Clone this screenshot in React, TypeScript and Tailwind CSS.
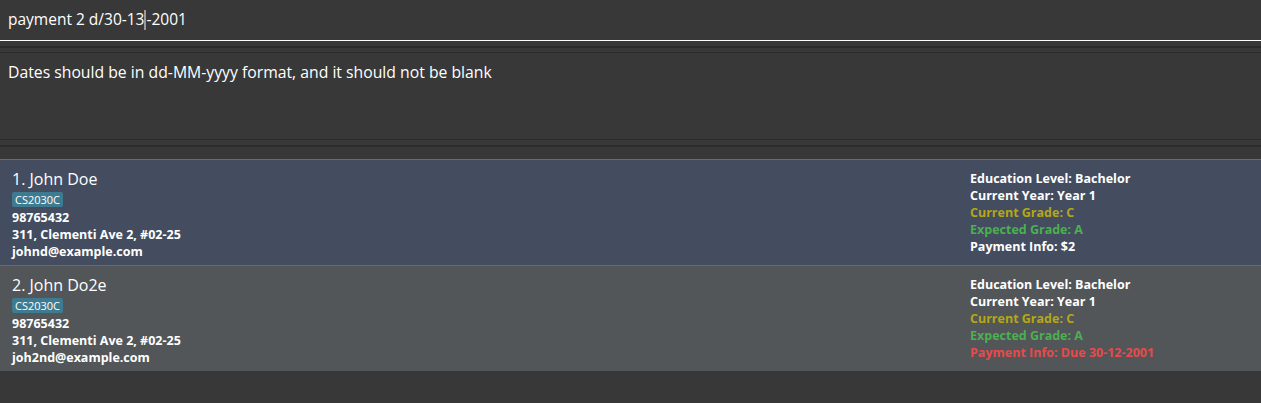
import React from "react";

const font = { fontFamily: '"Open Sans", "Noto Sans", sans-serif' };

function Card({
  idx,
  name,
  email,
  bg,
  payment,
  paymentColor,
}: {
  idx: number;
  name: string;
  email: string;
  bg: string;
  payment: string;
  paymentColor: string;
}) {
  return (
    <div className={`flex justify-between border-t border-[#3e7b91] ${bg} h-[106px]`}>
      <div className="flex flex-col pl-3 pt-[9px]">
        <div className="text-[16px] leading-[20px] text-white">
          {idx}. {name}
        </div>
        <div className="flex mt-[3px]">
          <span className="bg-[#3e7b91] text-white text-[11px] leading-[15px] px-[3px] rounded-[2px]">
            CS2030C
          </span>
        </div>
        <div className="text-[12.5px] leading-[17px] font-bold text-white mt-[2px]">98765432</div>
        <div className="text-[12.5px] leading-[17px] font-bold text-white">311, Clementi Ave 2, #02-25</div>
        <div className="text-[12.5px] leading-[17px] font-bold text-white">{email}</div>
      </div>
      <div className="flex flex-col w-[291px] pt-[10px] text-[12.5px] leading-[17px] font-bold">
        <div className="text-white">Education Level: Bachelor</div>
        <div className="text-white">Current Year: Year 1</div>
        <div className="text-[#b5a716]">Current Grade: C</div>
        <div className="text-[#4caf50]">Expected Grade: A</div>
        <div className={paymentColor}>{payment}</div>
      </div>
    </div>
  );
}

export default function App() {
  return (
    <div className="w-[1261px] h-[403px] bg-[#383838] overflow-hidden" style={font}>
      <div className="h-[41px] flex items-center px-2 border-b border-white">
        <span className="text-[15.5px] text-white">payment 2 d/30-13</span>
        <span className="w-[2px] h-[20px] bg-[#9a9a9a]" />
        <span className="text-[15.5px] text-white">-2001</span>
      </div>
      <div className="h-[5px]" />
      <div className="h-[2px] bg-[#2b2b2b]" />
      <div className="h-[4px]" />
      <div className="h-[88px] border-t border-b border-[#2c2c2c] px-2 pt-[8px]">
        <div className="text-[15.75px] leading-[22px] text-white">
          Dates should be in dd-MM-yyyy format, and it should not be blank
        </div>
      </div>
      <div className="h-[5px]" />
      <div className="h-[2px] bg-[#2b2b2b]" />
      <div className="h-[12px]" />
      <Card
        idx={1}
        name="John Doe"
        email="johnd@example.com"
        bg="bg-[#434d5f]"
        payment="Payment Info: $2"
        paymentColor="text-white"
      />
      <Card
        idx={2}
        name="John Do2e"
        email="joh2nd@example.com"
        bg="bg-[#525659]"
        payment="Payment Info: Due 30-12-2001"
        paymentColor="text-[#e84a4a]"
      />
    </div>
  );
}
